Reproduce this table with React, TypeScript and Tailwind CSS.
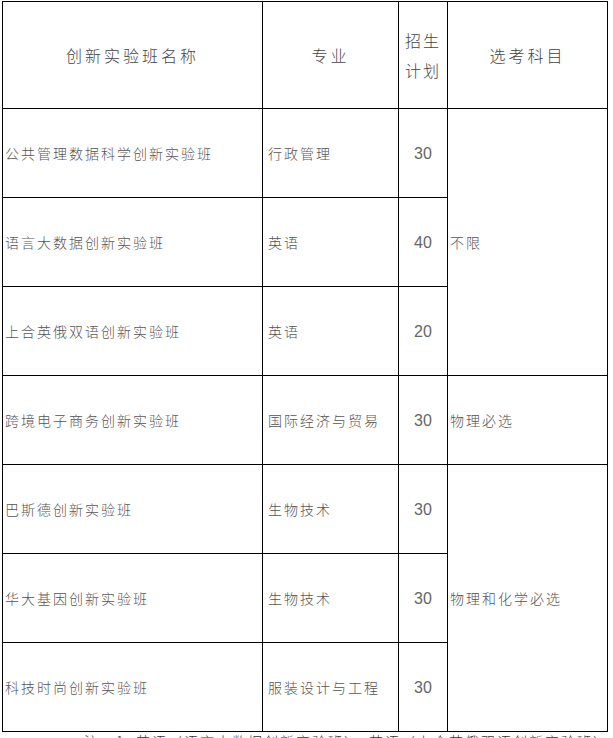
const rows = [
  { name: '公共管理数据科学创新实验班', major: '行政管理', plan: '30', subject: { text: '不限', span: 3 } },
  { name: '语言大数据创新实验班', major: '英语', plan: '40' },
  { name: '上合英俄双语创新实验班', major: '英语', plan: '20' },
  { name: '跨境电子商务创新实验班', major: '国际经济与贸易', plan: '30', subject: { text: '物理必选', span: 1 } },
  { name: '巴斯德创新实验班', major: '生物技术', plan: '30', subject: { text: '物理和化学必选', span: 3 } },
  { name: '华大基因创新实验班', major: '生物技术', plan: '30' },
  { name: '科技时尚创新实验班', major: '服装设计与工程', plan: '30' },
];

const cjk = 'font-["Noto_Sans_CJK_SC","Noto_Sans",sans-serif]';

export default function App() {
  return (
    <div className={`bg-white w-[613px] h-[738px] overflow-hidden ${cjk}`}>
      <table className="table-fixed border-collapse ml-[2px] mt-[1px] w-[605px] text-[#555]">
        <colgroup>
          <col className="w-[260px]" />
          <col className="w-[136px]" />
          <col className="w-[49px]" />
          <col className="w-[160px]" />
        </colgroup>
        <thead>
          <tr className="h-[107px] text-[16px] font-light tracking-[3px] text-[#444]">
            <th className="border border-black font-light text-center">创新实验班名称</th>
            <th className="border border-black font-light text-center">专业</th>
            <th className="border border-black font-light text-center tracking-[2px] leading-[30px] px-[6px]">
              招生
              <br />
              计划
            </th>
            <th className="border border-black font-light text-center">选考科目</th>
          </tr>
        </thead>
        <tbody>
          {rows.map((r) => (
            <tr key={r.name} className="h-[89px] text-[14px] font-light tracking-[2px]">
              <td className="border border-black pl-[2px] whitespace-nowrap">{r.name}</td>
              <td className="border border-black pl-[5px] whitespace-nowrap">{r.major}</td>
              <td className='border border-black text-center font-["Liberation_Sans",sans-serif] text-[16px] font-normal tracking-normal text-[#666] pt-[1px]'>
                {r.plan}
              </td>
              {r.subject && (
                <td rowSpan={r.subject.span} className="border border-black pl-[2px] whitespace-nowrap">
                  {r.subject.text}
                </td>
              )}
            </tr>
          ))}
        </tbody>
      </table>
      {/* note under the table, only its top edge is in view */}
      <p className="pl-[84px] pt-[2px] text-[14px] leading-[14px] font-light tracking-[2px] text-[#333] whitespace-nowrap">
        注：1. 英语（语言大数据创新实验班），英语（上合英俄双语创新实验班）
      </p>
    </div>
  );
}
